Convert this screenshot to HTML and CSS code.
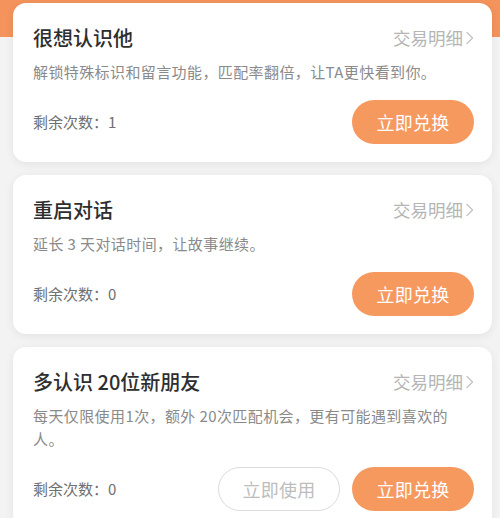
FILE: index.html
```html
<!DOCTYPE html>
<html lang="zh">
<head>
<meta charset="utf-8">
<link rel="stylesheet" href="styles.css">
</head>
<body>
<div class="page">
  <div class="band"></div>
  <div class="list">
    <div class="card">
      <div class="head">
        <div class="title">很想认识他</div>
        <div class="detail">交易明细<svg class="chev" width="8" height="14" viewBox="0 0 8 14"><path d="M1 1.5 L6.5 7 L1 12.5" fill="none" stroke="#c4c4c4" stroke-width="1.4" stroke-linecap="round" stroke-linejoin="round"/></svg></div>
      </div>
      <div class="desc">解锁特殊标识和留言功能，匹配率翻倍，让TA更快看到你。</div>
      <div class="foot">
        <div class="count">剩余次数：1</div>
        <div class="btns"><div class="btn primary">立即兑换</div></div>
      </div>
    </div>
    <div class="card">
      <div class="head">
        <div class="title">重启对话</div>
        <div class="detail">交易明细<svg class="chev" width="8" height="14" viewBox="0 0 8 14"><path d="M1 1.5 L6.5 7 L1 12.5" fill="none" stroke="#c4c4c4" stroke-width="1.4" stroke-linecap="round" stroke-linejoin="round"/></svg></div>
      </div>
      <div class="desc">延长 3 天对话时间，让故事继续。</div>
      <div class="foot">
        <div class="count">剩余次数：0</div>
        <div class="btns"><div class="btn primary">立即兑换</div></div>
      </div>
    </div>
    <div class="card">
      <div class="head">
        <div class="title">多认识 20位新朋友</div>
        <div class="detail">交易明细<svg class="chev" width="8" height="14" viewBox="0 0 8 14"><path d="M1 1.5 L6.5 7 L1 12.5" fill="none" stroke="#c4c4c4" stroke-width="1.4" stroke-linecap="round" stroke-linejoin="round"/></svg></div>
      </div>
      <div class="desc">每天仅限使用1次，额外 20次匹配机会，更有可能遇到喜欢的人。</div>
      <div class="foot">
        <div class="count">剩余次数：0</div>
        <div class="btns"><div class="btn ghost">立即使用</div><div class="btn primary">立即兑换</div></div>
      </div>
    </div>
  </div>
</div>
</body>
</html>
```
FILE: styles.css
```css
* { box-sizing: border-box; }
html, body { margin: 0; padding: 0; }
body {
  background: #f3f3f3;
  font-family: "Noto Sans CJK SC", "Noto Sans", "Liberation Sans", sans-serif;
  width: 500px;
  height: 518px;
  overflow: hidden;
}
.page { position: relative; }
.band {
  position: absolute;
  left: 0; top: 0; right: 0;
  height: 37px;
  background: #f4935c;
}
.list {
  position: relative;
  padding: 3px 8px 0 13px;
  display: flex;
  flex-direction: column;
  gap: 13px;
}
.card {
  background: #fff;
  border-radius: 13px;
  box-shadow: 0 2px 10px rgba(0,0,0,0.07);
  padding: 21px 18px 18px 20px;
}
.head {
  display: flex;
  justify-content: space-between;
  align-items: center;
  height: 28px;
}
.title {
  font-size: 20px;
  line-height: 28px;
  font-weight: 500;
  color: #2e2e2e;
}
.detail {
  font-size: 17.5px;
  line-height: 24px;
  color: #b5b5b5;
  display: flex;
  align-items: center;
  gap: 3px;
}
.chev { display: block; }
.desc {
  margin-top: 8px;
  font-size: 15px;
  letter-spacing: 0.4px;
  line-height: 23px;
  color: #8a8a8a;
}
.foot {
  margin-top: 17px;
  display: flex;
  justify-content: space-between;
  align-items: center;
}
.count {
  font-size: 15px;
  line-height: 20px;
  color: #707070;
}
.btns { display: flex; gap: 12px; }
.btn {
  width: 122px;
  height: 44px;
  border-radius: 22px;
  display: flex;
  align-items: center;
  justify-content: center;
  font-size: 18px;
  letter-spacing: 0.3px;
}
.primary {
  background: #f6995f;
  color: #fff;
}
.ghost {
  border: 1px solid #dcdcdc;
  color: #bdbdbd;
  background: #fff;
}
```
